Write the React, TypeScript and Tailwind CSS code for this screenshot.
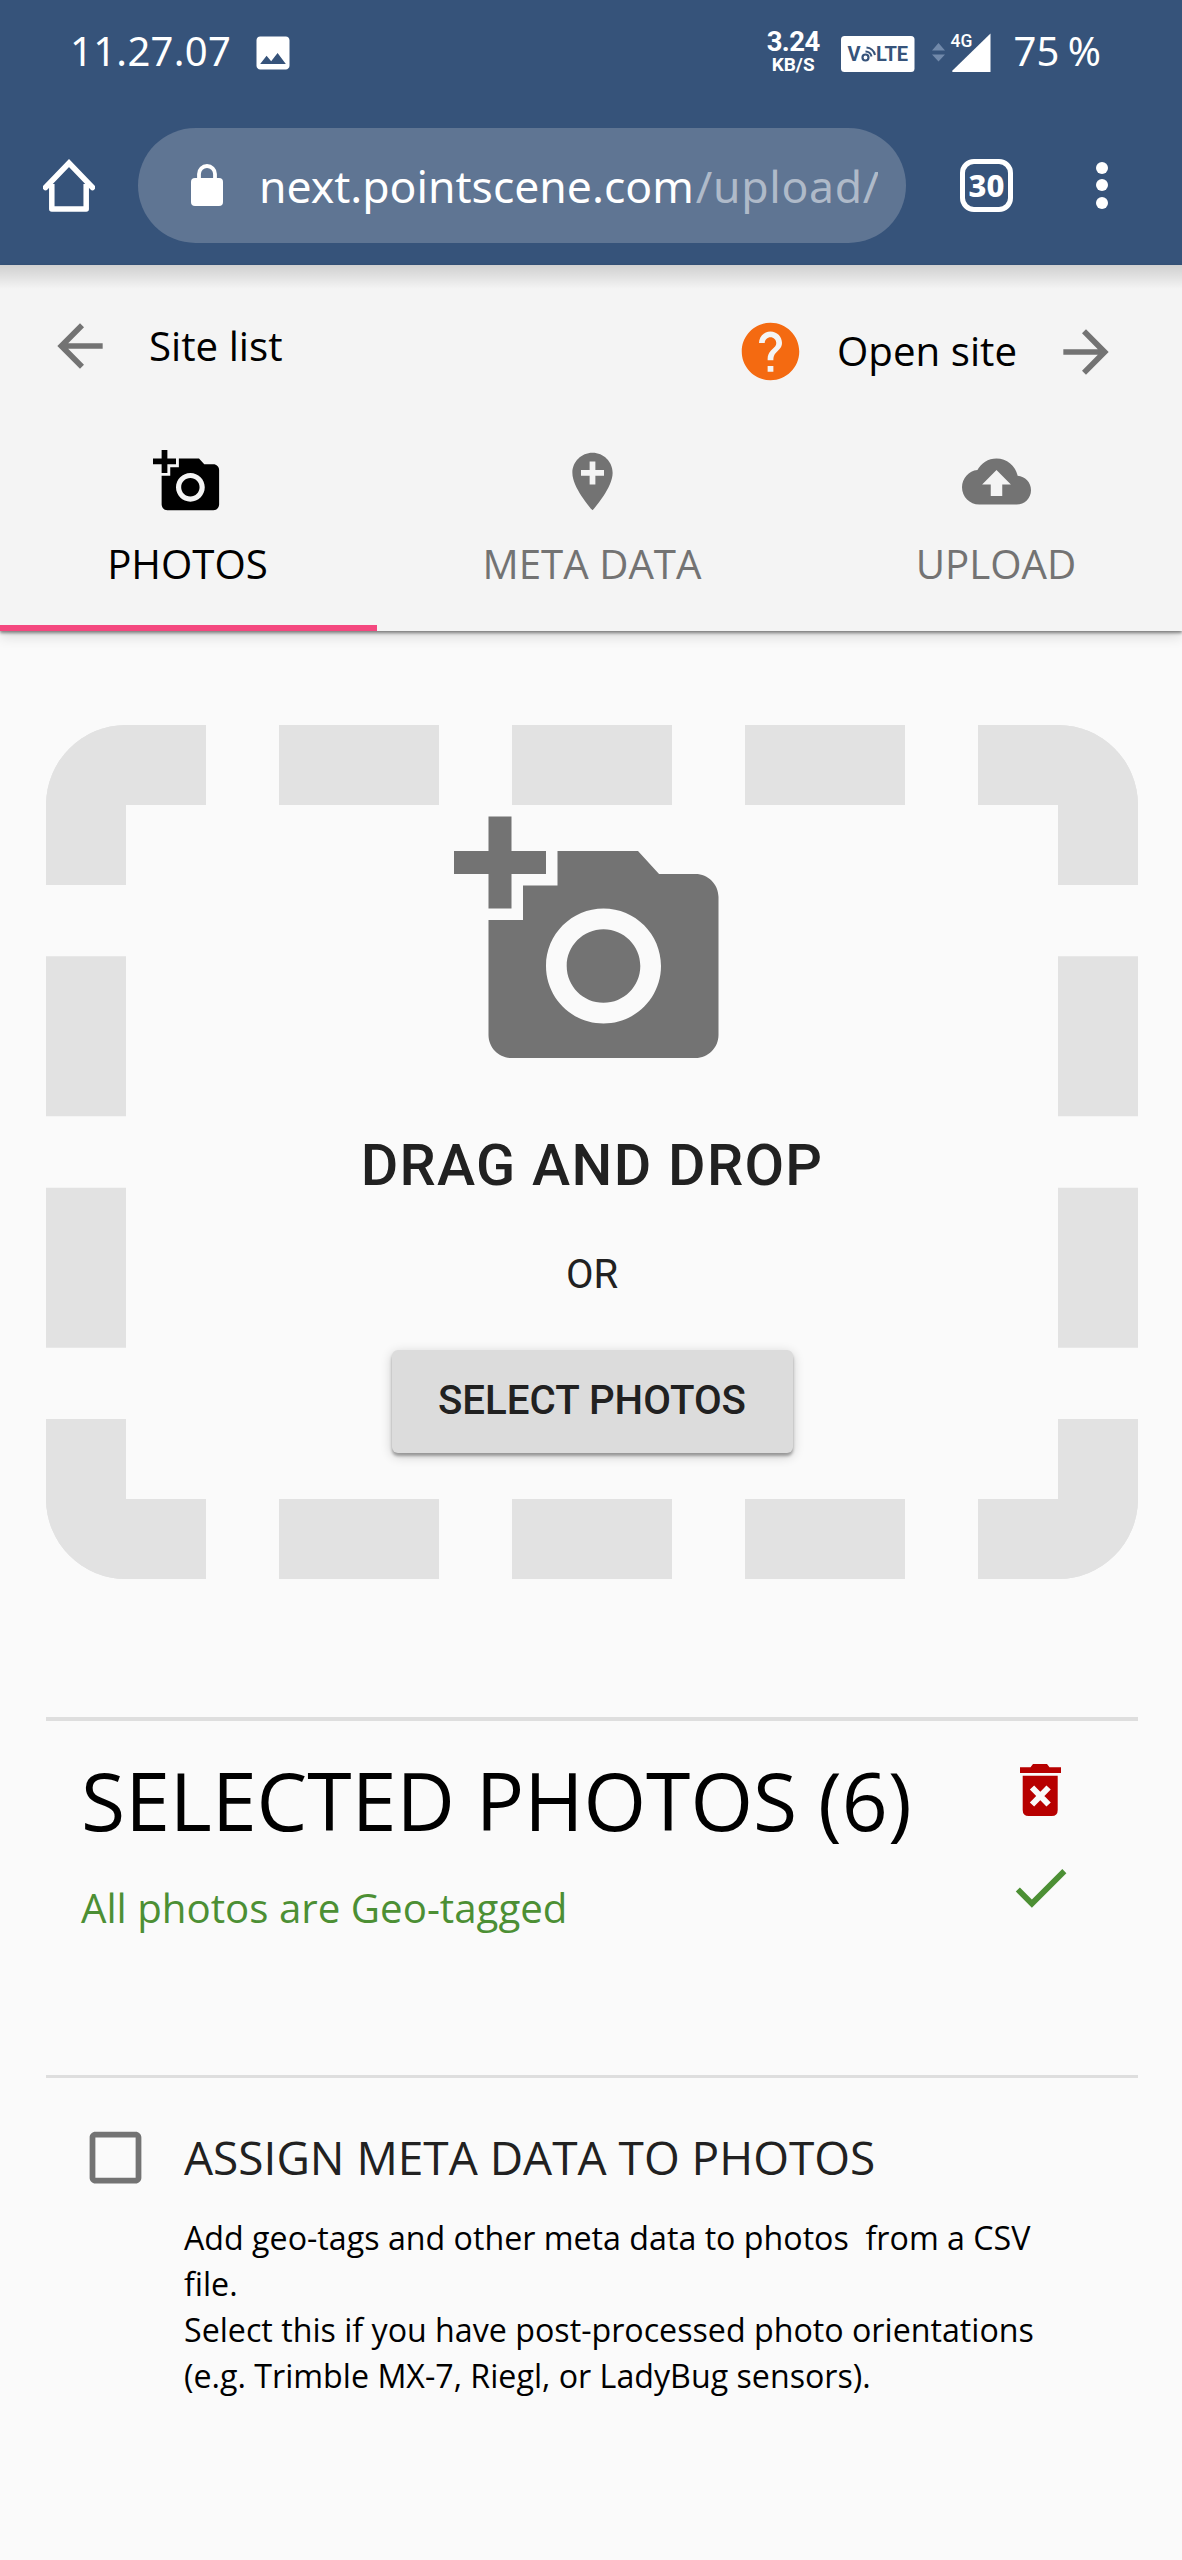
import type { ReactNode } from 'react';
import {
  MdAddAPhoto,
  MdAddLocation,
  MdArrowBack,
  MdArrowForward,
  MdCheck,
  MdCheckBoxOutlineBlank,
  MdCloudUpload,
  MdHelp,
  MdImage,
} from 'react-icons/md';

function VolteBadge() {
  return (
    <svg width="74" height="36" viewBox="0 0 74 36" fill="none">
      <rect width="73.500" height="36" rx="3.5" fill="#fff" />
      <g fill="#36537a" fontFamily="Roboto, sans-serif" fontWeight="700">
        <text x="6.500" y="25.3" fontSize="20">V</text>
        <text x="35" y="25.3" fontSize="20" textLength="32">LTE</text>
      </g>
      <circle cx="24.500" cy="21.500" r="3" stroke="#36537a" strokeWidth="2.200" />
      <path d="M24.500 15.500a6 6 0 0 1 6 5M25.500 11.500a9.500 9.500 0 0 1 8.500 7.500" stroke="#36537a" strokeWidth="2" />
    </svg>
  );
}

function SignalIcon() {
  return (
    <svg width="60" height="40" viewBox="0 0 60 40">
      <path d="M0 18.500 6.500 11 13 18.500zM0 22.500h13L6.500 29.500z" fill="#7189aa" />
      <path d="M58.500 1.500V40H21q-1.500 0-.5-1.500z" fill="#fff" />
      <text x="18.500" y="15" fontSize="17.500" fontWeight="500" fontFamily="Roboto, sans-serif" fill="#fff">4G</text>
    </svg>
  );
}

function LockIcon() {
  return (
    <svg className="shrink-0" width="32" height="42" viewBox="0 0 32 42">
      <rect y="14" width="32" height="28" rx="4" fill="#fff" />
      <path d="M8 16v-6a8 8 0 0 1 16 0v6" fill="none" stroke="#fff" strokeWidth="3.800" />
    </svg>
  );
}

function StatusBar() {
  return (
    <div className="flex h-[105px] items-center pr-[81px] pb-[5px] pl-[70px]">
      <span className="mt-[2px] text-[40px] leading-none tracking-[0.3px]">11.27.07</span>
      <MdImage className="ml-5 size-[44px] shrink-0 translate-y-[3px]" />
      <div className="ml-auto flex items-center">
        <div className="mt-[4px] flex flex-col items-center font-['Roboto'] font-bold">
          <span className="text-[27.500px] leading-[26px] tracking-[-0.600px]">3.24</span>
          <span className="text-[19px] leading-[20px]">KB/S</span>
        </div>
        <div className="ml-[21px] mt-[7px]"><VolteBadge /></div>
        <div className="ml-[17px] mt-[3px]"><SignalIcon /></div>
        <span className="mt-[2px] ml-[22px] text-[40px] leading-none [word-spacing:-2px]">75 %</span>
      </div>
    </div>
  );
}

function AddressBar() {
  return (
    <div className="flex h-[160px] items-center pl-[43px]">
      <svg width="52" height="53" viewBox="0 0 52 53" fill="none" stroke="#fff" strokeWidth="5.500" strokeLinejoin="round">
        <path d="M2.500 28.500 26 4l23.500 24.500" strokeLinecap="round" strokeLinejoin="miter" />
        <path d="M8.800 25v25h34.400V25" />
      </svg>
      <div className="ml-[43px] flex h-[115px] w-[768px] items-center rounded-full bg-[#5f7593] pl-[53px]">
        <LockIcon />
        <div className="mt-[2px] ml-[36px] w-[619px] overflow-hidden whitespace-nowrap text-[44.500px] leading-[64px]">
          next.pointscene.com<span className="pl-[2px] text-[#afbac9] tracking-[0.700px]">/upload/</span>
        </div>
      </div>
      <div className="ml-[54px] flex size-[53px] items-center justify-center rounded-[14px] border-[5.500px] border-white text-[31px] font-extrabold leading-none">
        30
      </div>
      <div className="ml-[83px] flex flex-col gap-[5.500px]">
        <span className="size-[12px] rounded-full bg-white" />
        <span className="size-[12px] rounded-full bg-white" />
        <span className="size-[12px] rounded-full bg-white" />
      </div>
    </div>
  );
}

interface TabProps {
  icon: ReactNode;
  label: string;
  width: string;
  active?: boolean;
}

function Tab({ icon, label, width, active = false }: TabProps) {
  return (
    <button
      className={`flex h-[184px] flex-col items-center border-b-[6px] ${width} ${
        active ? 'border-[#f4487f] text-black' : 'border-transparent text-[#737373]'
      }`}
    >
      <span className="text-[69px]">{icon}</span>
      <span className="mt-[21px] text-[40.250px] leading-[54px]">{label}</span>
    </button>
  );
}

function SiteHeader() {
  return (
    <header className="relative bg-[#f4f4f4] shadow-[0_2px_3px_rgba(0,0,0,0.45),0_6px_12px_rgba(0,0,0,0.12)]">
      <div className="absolute inset-x-0 top-0 h-[24px] bg-gradient-to-b from-black/15 to-transparent" />
      <div className="flex h-[182px] items-start justify-between pr-[62px] pl-[46px]">
        <div className="mt-[46px] flex h-[69px] items-center">
          <MdArrowBack className="size-[68px] text-[#737373]" />
          <span className="mt-[2px] ml-[35px] text-[40.250px] leading-none">Site list</span>
        </div>
        <div className="mt-[52px] flex h-[69px] items-center">
          <MdHelp className="size-[69px] text-[#f46a11]" />
          <span className="ml-[32px] text-[40.250px] leading-none">Open site</span>
          <MdArrowForward className="ml-[35px] size-[68px] text-[#737373]" />
        </div>
      </div>
      <div className="flex">
        <Tab icon={<MdAddAPhoto />} label="PHOTOS" width="w-[377px] pr-[2px]" active />
        <Tab icon={<MdAddLocation />} label="META DATA" width="w-[433px] pr-[3px]" />
        <Tab icon={<MdCloudUpload />} label="UPLOAD" width="w-[372px]" />
      </div>
    </header>
  );
}

function DropZone() {
  return (
    <section className="mt-[94px] flex h-[854px] flex-col items-center rounded-[80px] border-[80px] border-dashed border-[#e2e2e2] font-['Roboto'] text-[#212121]">
      <MdAddAPhoto className="size-[276px] shrink-0 text-[#737373]" />
      <h2 className="mt-[51px] text-[57.500px] font-medium leading-[68px] tracking-[1.300px]">DRAG AND DROP</h2>
      <p className="mt-[52px] text-[40px] leading-[46px]">OR</p>
      <button className="mt-[52px] h-[103px] w-[401px] shrink-0 rounded-[6px] bg-[#dcdcdc] text-[40.250px] font-medium leading-none shadow-[0_3px_3px_rgba(0,0,0,0.3),0_3px_12px_rgba(0,0,0,0.2)]">
        SELECT PHOTOS
      </button>
    </section>
  );
}

function TrashIcon() {
  return (
    <svg width="41" height="52" viewBox="0 0 41 52" fill="#b70000">
      <path d="M0 3.300h10.500L13 0h14l2.500 3.300H41V9H0zM2.700 11.700h35V46q0 6-6 6h-23q-6 0-6-6z" />
      <path d="m12 23.500 16.600 17m0-17-16.600 17" stroke="#fafafa" strokeWidth="6" />
    </svg>
  );
}

function SelectedPhotos() {
  return (
    <section className="mt-[138px] flex h-[361px] justify-between border-t-[4px] border-b-[3px] border-[#dedede] pr-[63px] pl-[35px]">
      <div>
        <h1 className="mt-[24px] text-[80.500px] leading-[110px]">SELECTED PHOTOS (6)</h1>
        <p className="mt-[26px] text-[40.250px] leading-[54px] text-[#4c8f34]">All photos are Geo-tagged</p>
      </div>
      <div className="flex flex-col items-center pt-[43px]">
        <TrashIcon />
        <MdCheck className="mt-[37px] size-[69px] text-[#4c8f34]" />
      </div>
    </section>
  );
}

function AssignMetaData() {
  return (
    <section className="flex pt-[45px] pl-[35px]">
      <MdCheckBoxOutlineBlank className="size-[69px] shrink-0 text-[#737373]" />
      <div className="ml-[34px]">
        <h3 className="text-[46px] leading-[69px] text-[#212121]">ASSIGN META DATA TO PHOTOS</h3>
        <p className="mt-[23px] whitespace-nowrap text-[32.200px] leading-[46px]">
          Add geo-tags and other meta data to photos&nbsp; from a CSV
          <br />
          file.
          <br />
          Select this if you have post-processed photo orientations
          <br />
          (e.g. Trimble MX-7, Riegl, or LadyBug sensors).
        </p>
      </div>
    </section>
  );
}

export default function App() {
  return (
    <div className="h-[2560px] w-[1182px] overflow-hidden bg-[#fafafa] font-['Open_Sans',sans-serif] text-black">
      <div className="bg-[#36537a] font-['Noto_Sans',sans-serif] text-white">
        <StatusBar />
        <AddressBar />
      </div>
      <SiteHeader />
      <main className="mr-[44px] ml-[46px]">
        <DropZone />
        <SelectedPhotos />
        <AssignMetaData />
      </main>
    </div>
  );
}
